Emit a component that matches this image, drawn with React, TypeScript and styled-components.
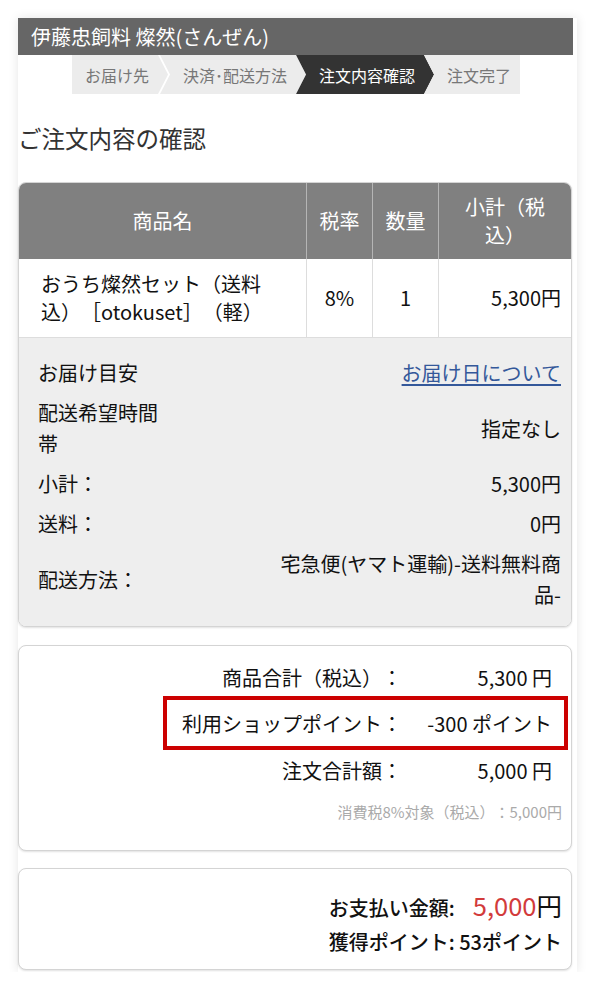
import { createGlobalStyle, styled } from 'styled-components';

const GlobalStyle = createGlobalStyle`
  html, body {
    margin: 0;
    padding: 0;
    background: #fff;
  }
  body {
    font-family: 'Noto Sans CJK JP', 'Noto Sans', sans-serif;
    color: #222;
    text-spacing-trim: space-all;
  }
`;

const Page = styled.div`
  margin: 18px 0 0 18px;
  width: 555px;
  padding: 0 4px 2px 0;
  background: #fff;
  box-shadow: 0 0 10px rgba(0, 0, 0, 0.1);
`;

const ShopBar = styled.div`
  height: 37px;
  background: #666;
  color: #fff;
  font-size: 20px;
  line-height: 37px;
  padding-left: 13px;
`;

const Steps = styled.div`
  display: flex;
  margin-left: 54px;
  height: 39px;
`;

const Step = styled.div<{ $active?: boolean; $first?: boolean; $last?: boolean; $gap?: boolean }>`
  display: flex;
  align-items: center;
  font-size: 16px;
  background: ${(p) => (p.$active ? '#333' : '#ececec')};
  color: ${(p) => (p.$active ? '#fff' : '#777')};
  padding-left: ${(p) => (p.$first ? '13px' : '23px')};
  padding-right: ${(p) => (p.$last ? '9px' : '19px')};
  margin-left: ${(p) => (p.$first ? '0' : p.$gap ? '-8px' : '-10px')};
  clip-path: polygon(
    0 0,
    ${(p) => (p.$last ? '100% 0, 100% 100%' : 'calc(100% - 10px) 0, 100% 50%, calc(100% - 10px) 100%')},
    0 100%
    ${(p) => (p.$first ? '' : ', 10px 50%')}
  );
`;

const Title = styled.h1`
  margin: 28px 0 0;
  font-size: 23.5px;
  font-weight: 400;
  line-height: 32px;
  color: #333;
`;

const Card = styled.div<{ $mt: number }>`
  margin-top: ${(p) => p.$mt}px;
  width: 552px;
  border: 1px solid #d4d4d4;
  border-radius: 8px;
  overflow: hidden;
  background: #fff;
  box-shadow: 0 1px 2px rgba(0, 0, 0, 0.12);
`;

const ItemGrid = styled.div`
  display: grid;
  grid-template-columns: 287px 66px 66px 1fr;
  font-size: 20px;
  line-height: 28px;
`;

const HeadCell = styled.div<{ $first?: boolean; $pad: number }>`
  display: flex;
  align-items: center;
  justify-content: center;
  text-align: center;
  background: #808080;
  color: #fff;
  padding: 10px ${(p) => p.$pad}px;
  min-height: 56px;
  border-left: ${(p) => (p.$first ? 'none' : '1px solid #b5b5b5')};
`;

const BodyCell = styled.div<{ $align: 'left' | 'center' | 'right'; $first?: boolean }>`
  display: flex;
  align-items: center;
  justify-content: ${(p) => (p.$align === 'left' ? 'flex-start' : p.$align === 'right' ? 'flex-end' : 'center')};
  padding: ${(p) => (p.$first ? '11px 20px 11px 22px' : '11px 10px')};
  min-height: 56px;
  color: #111;
  border-left: ${(p) => (p.$first ? 'none' : '1px solid #ddd')};
`;

const Details = styled.div`
  background: #eee;
  border-top: 1px solid #ddd;
  padding: 19px 10px 16px 19px;
  display: flex;
  flex-direction: column;
  gap: 9px;
  font-size: 20px;
  line-height: 31px;
  color: #111;
`;

const DetailRow = styled.div`
  display: flex;
  align-items: center;
  justify-content: space-between;
`;

const DetailLabel = styled.div`
  width: 130px;
`;

const DetailValue = styled.div`
  max-width: 296px;
  text-align: right;
`;

const DateLink = styled.a`
  color: #34589a;
  text-decoration: underline;
  text-underline-offset: 3px;
`;

const Totals = styled.div`
  padding: 10px 19px 27px;
  display: flex;
  flex-direction: column;
  align-items: flex-end;
  font-size: 20px;
  line-height: 31px;
  color: #111;
`;

const TotalRow = styled.div<{ $highlight?: boolean }>`
  display: flex;
  justify-content: flex-end;
  padding: ${(p) => (p.$highlight ? '7.5px 12px 7.5px 0' : '6px 0')};
  ${(p) =>
    p.$highlight &&
    `
    width: 385px;
    border: 4px solid #cc0000;
    margin: -3px -16px -1px 0;
  `}
`;

const TotalLabel = styled.span`
  text-align: right;
`;

const TotalValue = styled.span`
  width: 150px;
  text-align: right;
`;

const TaxNote = styled.div`
  margin: 9px -10px 0 0;
  font-size: 15px;
  line-height: 22px;
  color: #aaa;
`;

const Payment = styled.div`
  padding: 17px 9px 12px;
  display: flex;
  flex-direction: column;
  align-items: flex-end;
  color: #111;
`;

const PayLine = styled.div`
  display: flex;
  align-items: baseline;
  font-size: 20px;
  line-height: 37px;
`;

const PayLabel = styled.span`
  font-weight: 500;
  margin-right: 18px;
`;

const PayAmount = styled.span`
  font-size: 25.5px;
  color: #d23b3b;
`;

const Yen = styled.span`
  font-size: 25.5px;
`;

const EarnLine = styled.div`
  font-size: 20px;
  line-height: 31px;
  font-weight: 500;
`;

const steps = ['お届け先', '決済･配送方法', '注文内容確認', '注文完了'];

export default function App() {
  return (
    <>
      <GlobalStyle />
      <Page>
        <ShopBar>伊藤忠飼料 燦然(さんぜん)</ShopBar>
        <Steps>
          {steps.map((s, i) => (
            <Step
              key={s}
              $first={i === 0}
              $last={i === steps.length - 1}
              $active={i === 2}
              $gap={i === 1}
            >
              {s}
            </Step>
          ))}
        </Steps>
        <Title>ご注文内容の確認</Title>

        <Card $mt={28}>
          <ItemGrid>
            <HeadCell $first $pad={10}>商品名</HeadCell>
            <HeadCell $pad={2}>税率</HeadCell>
            <HeadCell $pad={2}>数量</HeadCell>
            <HeadCell $pad={14}>小計（税込）</HeadCell>
            <BodyCell $align="left" $first>
              おうち燦然セット（送料込）［otokuset］（軽）
            </BodyCell>
            <BodyCell $align="center">8%</BodyCell>
            <BodyCell $align="center">1</BodyCell>
            <BodyCell $align="right">5,300円</BodyCell>
          </ItemGrid>
          <Details>
            <DetailRow>
              <DetailLabel>お届け目安</DetailLabel>
              <DetailValue>
                <DateLink href="#">お届け日について</DateLink>
              </DetailValue>
            </DetailRow>
            <DetailRow>
              <DetailLabel>配送希望時間帯</DetailLabel>
              <DetailValue>指定なし</DetailValue>
            </DetailRow>
            <DetailRow>
              <DetailLabel>小計：</DetailLabel>
              <DetailValue>5,300円</DetailValue>
            </DetailRow>
            <DetailRow>
              <DetailLabel>送料：</DetailLabel>
              <DetailValue>0円</DetailValue>
            </DetailRow>
            <DetailRow>
              <DetailLabel>配送方法：</DetailLabel>
              <DetailValue>宅急便(ヤマト運輸)-送料無料商品-</DetailValue>
            </DetailRow>
          </Details>
        </Card>

        <Card $mt={18}>
          <Totals>
            <TotalRow>
              <TotalLabel>商品合計（税込）：</TotalLabel>
              <TotalValue>5,300 円</TotalValue>
            </TotalRow>
            <TotalRow $highlight>
              <TotalLabel>利用ショップポイント：</TotalLabel>
              <TotalValue>-300 ポイント</TotalValue>
            </TotalRow>
            <TotalRow>
              <TotalLabel>注文合計額：</TotalLabel>
              <TotalValue>5,000 円</TotalValue>
            </TotalRow>
            <TaxNote>消費税8%対象（税込）：5,000円</TaxNote>
          </Totals>
        </Card>

        <Card $mt={17}>
          <Payment>
            <PayLine>
              <PayLabel>お支払い金額:</PayLabel>
              <PayAmount>5,000</PayAmount>
              <Yen>円</Yen>
            </PayLine>
            <EarnLine>獲得ポイント: 53ポイント</EarnLine>
          </Payment>
        </Card>
      </Page>
    </>
  );
}
